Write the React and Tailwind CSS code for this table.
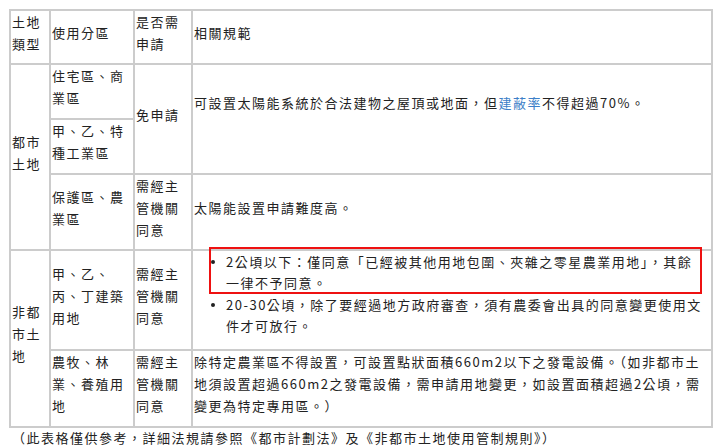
export default function App() {
  const td = "border-r-2 border-b-2 border-[#cccccc] px-[1px] pt-0 pb-[9px] align-middle"
  const th = "border-r-2 border-b-2 border-[#cccccc] px-[1px] pt-0 pb-[8px] align-middle text-left font-normal"

  return (
    <div
      lang="zh-Hant"
      className="min-h-screen bg-white pl-[9px] pt-[9px] text-[13px] leading-[22px] tracking-[1.5px] text-[#222222]"
      style={{ fontFamily: '"Noto Sans CJK TC", "Noto Sans", sans-serif' }}
    >
      <table className="w-[704px] table-fixed border-separate border-spacing-0 border-l-2 border-t-2 border-[#cccccc]">
        <thead>
          <tr>
            <th className={`${th} w-[40px]`}>土地類型</th>
            <th className={`${th} w-[84px]`}>使用分區</th>
            <th className={`${th} w-[58px]`}>是否需申請</th>
            <th className={`${th} w-[520px]`}>相關規範</th>
          </tr>
        </thead>
        <tbody>
          <tr>
            <td rowSpan={3} className={td}>都市土地</td>
            <td className={td}>住宅區、商業區</td>
            <td rowSpan={2} className={td}>免申請</td>
            <td rowSpan={2} className="border-r-2 border-b-2 border-[#cccccc] px-[1px] pt-0 pb-[32px] align-middle whitespace-nowrap">
              可設置太陽能系統於合法建物之屋頂或地面，但<span className="text-[#3d7fc8]">建蔽率</span>不得超過70%。
            </td>
          </tr>
          <tr>
            <td className={td}>甲、乙、特種工業區</td>
          </tr>
          <tr>
            <td className="border-r-2 border-b-2 border-[#cccccc] px-[1px] pt-0 pb-[8px] align-middle">保護區、農業區</td>
            <td className="border-r-2 border-b-2 border-[#cccccc] px-[1px] pt-0 pb-[8px] align-middle">需經主管機關同意</td>
            <td className="border-r-2 border-b-2 border-[#cccccc] px-[1px] pt-0 pb-[8px] align-middle">太陽能設置申請難度高。</td>
          </tr>
          <tr>
            <td rowSpan={2} className={td}>非都市土地</td>
            <td className={td}>甲、乙、丙、丁建築用地</td>
            <td className={td}>需經主管機關同意</td>
            <td className="border-r-2 border-b-2 border-[#cccccc] px-[1px] pt-0 pb-[13px] align-middle">
              <ul className="flex flex-col gap-[1px] leading-[21px] whitespace-nowrap">
                <li className="relative flex">
                  <div className="w-[32px] shrink-0 pl-[17px] pt-[9px]">
                    <div className="h-[4px] w-[4px] rounded-full bg-[#222222]" />
                  </div>
                  <div>
                    2公頃以下：僅同意「已經被其他用地包圍、夾雜之零星農業用地」，其餘
                    <br />
                    一律不予同意。
                  </div>
                  <div className="pointer-events-none absolute -top-[4px] left-[15px] h-[47px] w-[493px] border-2 border-[#ee1111]" />
                </li>
                <li className="flex">
                  <div className="w-[32px] shrink-0 pl-[17px] pt-[9px]">
                    <div className="h-[4px] w-[4px] rounded-full bg-[#222222]" />
                  </div>
                  <div>
                    20-30公頃，除了要經過地方政府審查，須有農委會出具的同意變更使用文
                    <br />
                    件才可放行。
                  </div>
                </li>
              </ul>
            </td>
          </tr>
          <tr>
            <td className={td}>農牧、林業、養殖用地</td>
            <td className={td}>需經主管機關同意</td>
            <td className={`${td} whitespace-nowrap`}>
              除特定農業區不得設置，可設置點狀面積660m2以下之發電設備。（如非都市土
              <br />
              地須設置超過660m2之發電設備，需申請用地變更，如設置面積超過2公頃，需
              <br />
              變更為特定專用區。）
            </td>
          </tr>
        </tbody>
      </table>
      <p className="pl-[3px] leading-[20px]">
        （此表格僅供參考，詳細法規請參照《都市計劃法》及《非都市土地使用管制規則》）
      </p>
    </div>
  )
}
